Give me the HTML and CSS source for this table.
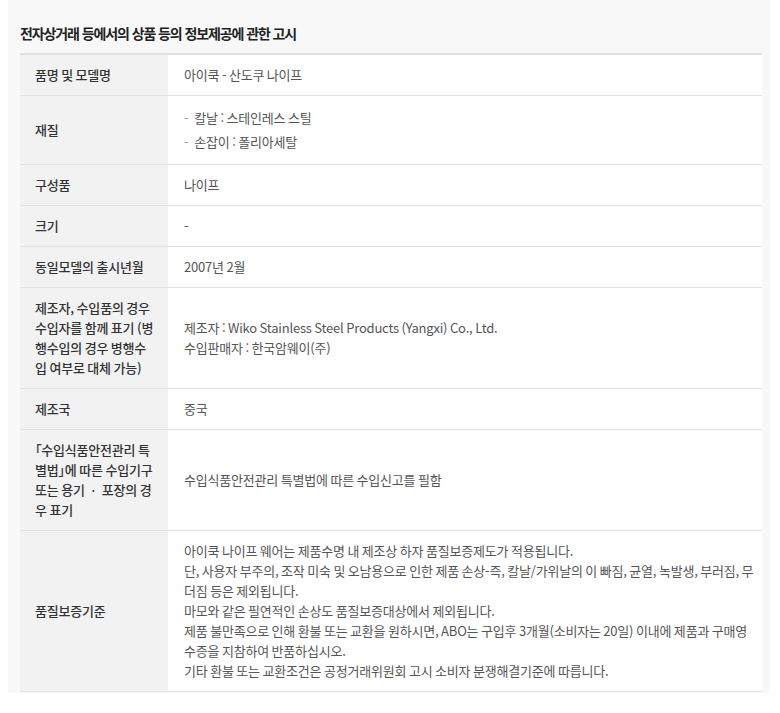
FILE: index.html
```html
<!DOCTYPE html>
<html lang="ko">

<head>
    <meta charset="UTF-8">
    <title>상품정보제공 고시</title>
    <link rel="stylesheet" href="styles.css">
</head>

<body>
    <div class="notice">
        <h3 class="notice-title">전자상거래 등에서의 상품 등의 정보제공에 관한 고시</h3>
        <table class="info-table">
            <tr>
                <th>품명 및 모델명</th>
                <td>아이쿡 - 산도쿠 나이프</td>
            </tr>
            <tr>
                <th>재질</th>
                <td>
                    <ul class="dash-list">
                        <li>칼날 : 스테인레스 스틸</li>
                        <li>손잡이 : 폴리아세탈</li>
                    </ul>
                </td>
            </tr>
            <tr>
                <th>구성품</th>
                <td>나이프</td>
            </tr>
            <tr>
                <th>크기</th>
                <td>-</td>
            </tr>
            <tr>
                <th>동일모델의 출시년월</th>
                <td>2007년 2월</td>
            </tr>
            <tr>
                <th>제조자, 수입품의 경우 수입자를 함께 표기 (병행수입의 경우 병행수입 여부로 대체 가능)</th>
                <td>제조자 : Wiko Stainless Steel Products (Yangxi) Co., Ltd.<br>수입판매자 : 한국암웨이(주)</td>
            </tr>
            <tr>
                <th>제조국</th>
                <td>중국</td>
            </tr>
            <tr>
                <th>「수입식품안전관리 특별법」에 따른 수입기구 또는 용기 ㆍ 포장의 경우 표기</th>
                <td>수입식품안전관리 특별법에 따른 수입신고를 필함</td>
            </tr>
            <tr>
                <th>품질보증기준</th>
                <td>아이쿡 나이프 웨어는 제품수명 내 제조상 하자 품질보증제도가 적용됩니다.<br>단, 사용자 부주의, 조작 미숙 및 오남용으로 인한 제품 손상-즉, 칼날/가위날의 이 빠짐, 균열, 녹발생, 부러짐, 무더짐 등은 제외됩니다.<br>마모와 같은 필연적인 손상도 품질보증대상에서 제외됩니다.<br>제품 불만족으로 인해 환불 또는 교환을 원하시면, ABO는 구입후 3개월(소비자는 20일) 이내에 제품과 구매영수증을 지참하여 반품하십시오.<br>기타 환불 또는 교환조건은 공정거래위원회 고시 소비자 분쟁해결기준에 따릅니다.</td>
            </tr>
        </table>
    </div>
</body>

</html>
```

FILE: styles.css
```css
body {
    margin: 0;
    background: #fff;
    font-family: "Noto Sans CJK KR", "Noto Sans", sans-serif;
}

.notice {
    margin-left: 8px;
    width: 762px;
    box-sizing: border-box;
    padding: 23px 8px 1px 12px;
    background: #f8f8f8;
}

.notice-title {
    margin: 0 0 10px;
    font-size: 14px;
    line-height: 20px;
    font-weight: 700;
    letter-spacing: -1.1px;
    color: #222;
}

.info-table {
    width: 100%;
    border-collapse: collapse;
    border-top: 2px solid #e0e0e0;
    font-size: 13px;
    line-height: 20px;
    letter-spacing: -0.2px;
    word-spacing: -0.8px;
}

.info-table th,
.info-table td {
    padding: 10px 15px;
    border-bottom: 1px solid #e3e3e3;
    text-align: left;
    vertical-align: middle;
}

.info-table th {
    width: 121px;
    padding-right: 12px;
    background: #f2f2f2;
    font-weight: 500;
    font-feature-settings: "palt";
    color: #333;
}

.info-table td {
    padding-left: 16px;
    padding-right: 4px;
    background: #fff;
    color: #555;
}

.dash-list {
    margin: 0;
    padding: 0;
    list-style: none;
}

.dash-list li {
    display: flex;
    gap: 6px;
    padding: 2px 0;
}

.dash-list li::before {
    content: "-";
    color: #999;
}
```
